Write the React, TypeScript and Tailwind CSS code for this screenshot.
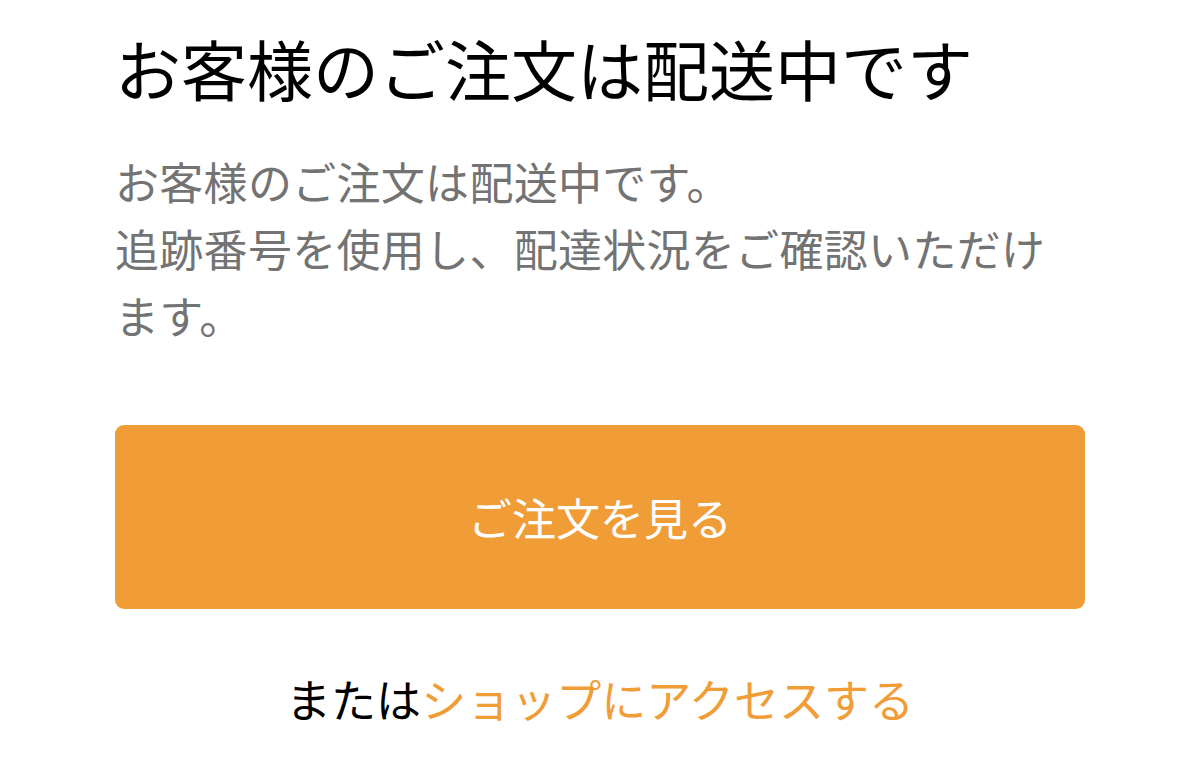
export default function App() {
  return (
    <div className="min-h-[773px] bg-white font-['Noto_Sans_CJK_JP',sans-serif]">
      <div className="mx-auto w-[970px] pt-[28px]">
        <h1 className="text-[66px] leading-[79px] font-normal text-black">
          お客様のご注文は配送中です
        </h1>
        <p className="mt-[41px] text-[44px] leading-[67px] text-[#737373] tracking-[0.3px]">
          お客様のご注文は配送中です。
          <br />
          追跡番号を使用し、配達状況をご確認いただけ
          <br />
          ます。
        </p>
        <button
          type="button"
          className="mt-[76px] flex h-[184px] w-full items-center justify-center rounded-[9px] bg-[#f09d38] text-[44px] text-white"
        >
          ご注文を見る
        </button>
        <p className="mt-[60px] text-center text-[45px] leading-[60px] text-black">
          または
          <a href="#" className="text-[#f09d38]">
            ショップにアクセスする
          </a>
        </p>
      </div>
    </div>
  );
}
